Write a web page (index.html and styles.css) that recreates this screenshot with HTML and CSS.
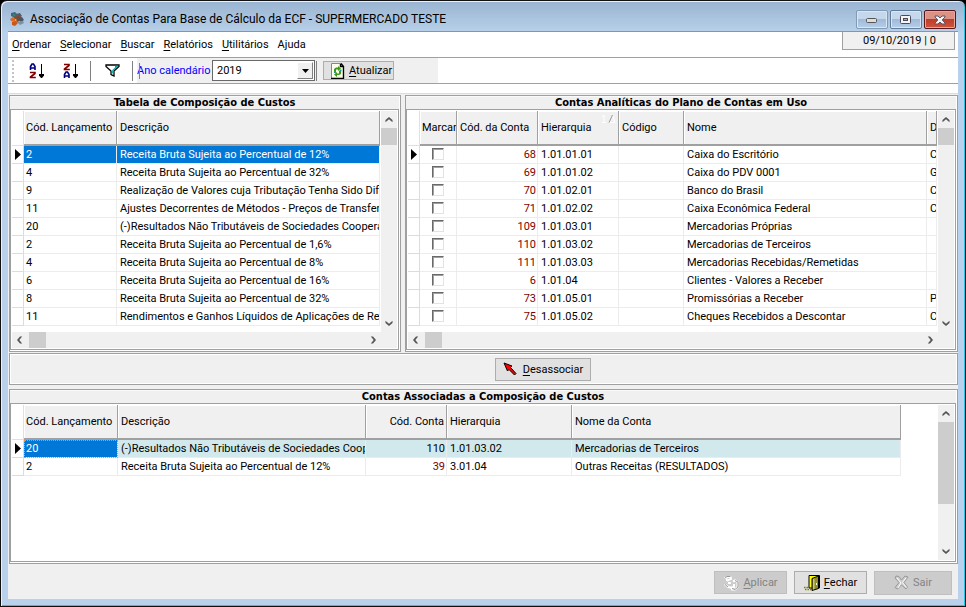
FILE: index.html
```html
<!DOCTYPE html>
<html lang="pt-BR">
<head>
<meta charset="utf-8">
<title>Associação de Contas Para Base de Cálculo da ECF</title>
<link rel="stylesheet" href="styles.css">
</head>
<body>
<svg class="defs" aria-hidden="true">
  <symbol id="up" viewBox="0 0 8 6"><path d="M0.5 5.2V3L4 0L7.5 3V5.2L4 2.3Z"/></symbol>
  <symbol id="down" viewBox="0 0 8 6"><path d="M0.5 0.8V3L4 6L7.5 3V0.8L4 3.7Z"/></symbol>
  <symbol id="left" viewBox="0 0 6 8"><path d="M5.2 0.5H3L0 4L3 7.5H5.2L2.3 4Z"/></symbol>
  <symbol id="right" viewBox="0 0 6 8"><path d="M0.8 0.5H3L6 4L3 7.5H0.8L3.7 4Z"/></symbol>
  <symbol id="cur" viewBox="0 0 6 11"><path d="M0 0L6 5.5L0 11Z"/></symbol>
</svg>
<div class="window">
  <header class="titlebar">
    <svg class="app-icon" width="16" height="16" viewBox="0 0 16 16" aria-hidden="true"><path d="M2 2l4-1 3 3-3 3-4-2z" fill="#3b6b78"/><path d="M7 3l4-1 2 3-3 2z" fill="#555b66"/><path d="M5 6l5-2 3 3-4 4-5-2z" fill="#7b4b3a"/><path d="M1 8l3-2 4 3-2 2-4-1z" fill="#e06a1c"/><path d="M8 8l5-2 2 3-3 2z" fill="#4a5568"/><path d="M3 11l4-1 2 2-3 3-3-1z" fill="#c8581c"/><path d="M8 11l6-1 1 2-4 2z" fill="#8090a0"/><path d="M6 8l2 1-2 1z" fill="#e8c040"/><path d="M4 3l2 1-1 1z" fill="#49a36b"/></svg>
    <h1>Associação de Contas Para Base de Cálculo da ECF - SUPERMERCADO TESTE</h1>
    <div class="controls">
      <button class="ctl dim" aria-label="Minimizar"><svg width="12" height="9" viewBox="0 0 12 9"><rect x=".5" y="3.5" width="10" height="4" rx="1" fill="#ddd" stroke="#555"/></svg></button>
      <button class="ctl" aria-label="Maximizar"><svg width="12" height="10" viewBox="0 0 12 10"><rect x=".5" y=".5" width="10" height="8" rx="1" fill="#f4f4f4" stroke="#4a4a5c"/><rect x="3.5" y="3.5" width="4" height="2" fill="#8fb0d4" stroke="#4a4a5c"/></svg></button>
      <button class="ctl close" aria-label="Fechar janela"><svg width="12" height="10" viewBox="0 0 12 10"><path d="M1 1H4L6 3L8 1H11V2L8.2 5L11 8V9H8L6 7L4 9H1V8L3.8 5L1 2Z" fill="#f4f4f4" stroke="#555566"/></svg></button>
    </div>
  </header>
  <main class="client">
    <div class="menubar">
      <nav>
        <a href="#"><u>O</u>rdenar</a><a href="#"><u>S</u>elecionar</a><a href="#"><u>B</u>uscar</a><a href="#"><u>R</u>elatórios</a><a href="#"><u>U</u>tilitários</a><a href="#">Ajuda</a>
      </nav>
      <div class="date">09/10/2019 | 0</div>
    </div>
    <div class="toolbar">
      <span class="grip"></span>
      <button class="tool" aria-label="Ordem crescente"><svg width="16" height="16" viewBox="0 0 16 16" fill="none"><path d="M1.500 7V3.500L3 1H4.500L6 3.500V7M1.500 5H6" stroke="#000080" stroke-width="1.600"/><path d="M1 9.500H6V10.500L1.500 14V14.500H6.800" stroke="#800000" stroke-width="1.600"/><path d="M12.500 1V12" stroke="#000"/><path d="M10 11H15V12.500L13 15H12L10 12.500Z" fill="#000"/></svg></button>
      <button class="tool" aria-label="Ordem decrescente"><svg width="16" height="16" viewBox="0 0 16 16" fill="none"><path d="M1 1.500H6V2.500L1.500 6V6.500H6.800" stroke="#800000" stroke-width="1.600"/><path d="M1.500 15V11.500L3 9H4.500L6 11.500V15M1.500 13H6" stroke="#000080" stroke-width="1.600"/><path d="M12.500 1V12" stroke="#000"/><path d="M10 11H15V12.500L13 15H12L10 12.500Z" fill="#000"/></svg></button>
      <span class="sep"></span>
      <button class="tool filter" aria-label="Filtrar"><svg width="15" height="13" viewBox="0 0 15 13"><path d="M1 1H14V2.500L9 7V12L6 10.500V7L1 2.500Z" fill="#fff" stroke="#000" stroke-width="1.300"/><path d="M10 2.500H12L7.800 6.500V9.500" fill="none" stroke="#00a8a8" stroke-width="1.300"/></svg></button>
      <span class="sep"></span>
      <div class="tools">
        <label for="ano">Ano calendário</label>
        <span class="combo"><select id="ano"><option>2019</option></select><span class="arrow"><svg width="7" height="4" viewBox="0 0 7 4"><path d="M0 0H7L3.500 4Z"/></svg></span></span>
        <span class="sep tight"></span>
        <button class="btn refresh"><svg width="14" height="16" viewBox="0 0 14 16"><path d="M.5 .5H9L13.500 4V15.500H.5Z" fill="#fdfdf2"/><path d="M.5 15V.5H10" fill="none" stroke="#888"/><path d="M10 .5L12.500 3.500V15.500H0M9.500 1V3.500H12.500" fill="none" stroke="#000" stroke-width="1.400"/><path d="M3 8V6L5 4.500H7V3L10 5.500L7 8V6.500H5V8Z" fill="#3a9a10"/><path d="M10 8V11L8 12H6V14L3 11.500L6 9V10.500H8V8Z" fill="#3a9a10"/><path d="M3 8H5V10H3ZM8.500 6.500H10.500V8.500H8.500Z" fill="#2196a0"/></svg><span><u>A</u>tualizar</span></button>
      </div>
    </div>
    <div class="strip"></div>
    <div class="work">
      <div class="top">
        <section class="panel">
          <h2>Tabela de Composição de Custos</h2>
          <div class="grid">
            <div class="view">
              <table>
                <colgroup><col class="w12"><col class="w93"><col></colgroup>
                <thead><tr><th></th><th>Cód. Lançamento</th><th>Descrição</th></tr></thead>
                <tbody>
                <tr class="sel"><td><svg class="cur"><use href="#cur"/></svg></td><td>2</td><td>Receita Bruta Sujeita ao Percentual de 12%</td></tr>
                <tr><td></td><td>4</td><td>Receita Bruta Sujeita ao Percentual de 32%</td></tr>
                <tr><td></td><td>9</td><td>Realização de Valores cuja Tributação Tenha Sido Dife</td></tr>
                <tr><td></td><td>11</td><td>Ajustes Decorrentes de Métodos - Preços de Transferê</td></tr>
                <tr><td></td><td>20</td><td>(-)Resultados Não Tributáveis de Sociedades Cooperat</td></tr>
                <tr><td></td><td>2</td><td>Receita Bruta Sujeita ao Percentual de 1,6%</td></tr>
                <tr><td></td><td>4</td><td>Receita Bruta Sujeita ao Percentual de 8%</td></tr>
                <tr><td></td><td>6</td><td>Receita Bruta Sujeita ao Percentual de 16%</td></tr>
                <tr><td></td><td>8</td><td>Receita Bruta Sujeita ao Percentual de 32%</td></tr>
                <tr><td></td><td>11</td><td>Rendimentos e Ganhos Líquidos de Aplicações de Ren</td></tr>
                </tbody>
              </table>
            </div>
            <div class="vbar"><svg class="ar"><use href="#up"/></svg><i class="thumb"></i><svg class="ar end"><use href="#down"/></svg></div>
            <div class="hbar"><svg class="ah"><use href="#left"/></svg><i class="thumb"></i><svg class="ah end"><use href="#right"/></svg></div>
          </div>
        </section>
        <section class="panel">
          <h2>Contas Analíticas do Plano de Contas em Uso</h2>
          <div class="grid">
            <div class="view">
              <table>
                <colgroup><col class="w12"><col class="w37"><col class="w81"><col class="w81"><col class="w65"><col><col class="w10"></colgroup>
                <thead><tr><th></th><th>Marcar</th><th>Cód. da Conta</th><th class="sorted">Hierarquia<svg class="sort" width="14" height="9" viewBox="0 0 14 9"><path d="M0 3L2 1V9M0 8.500H4M8 8.500H13L10.500 1" fill="none" stroke="#fff"/><path d="M7 8.500L10.500 1" fill="none" stroke="#999"/></svg></th><th>Código</th><th>Nome</th><th>D</th></tr></thead>
                <tbody>
                <tr><td><svg class="cur"><use href="#cur"/></svg></td><td class="ck"><input type="checkbox" aria-label="Marcar 68"></td><td class="num">68</td><td>1.01.01.01</td><td></td><td>Caixa do Escritório</td><td>C</td></tr>
                <tr><td></td><td class="ck"><input type="checkbox" aria-label="Marcar 69"></td><td class="num">69</td><td>1.01.01.02</td><td></td><td>Caixa do PDV 0001</td><td>G</td></tr>
                <tr><td></td><td class="ck"><input type="checkbox" aria-label="Marcar 70"></td><td class="num">70</td><td>1.01.02.01</td><td></td><td>Banco do Brasil</td><td>C</td></tr>
                <tr><td></td><td class="ck"><input type="checkbox" aria-label="Marcar 71"></td><td class="num">71</td><td>1.01.02.02</td><td></td><td>Caixa Econômica Federal</td><td>C</td></tr>
                <tr><td></td><td class="ck"><input type="checkbox" aria-label="Marcar 109"></td><td class="num">109</td><td>1.01.03.01</td><td></td><td>Mercadorias Próprias</td><td></td></tr>
                <tr><td></td><td class="ck"><input type="checkbox" aria-label="Marcar 110"></td><td class="num">110</td><td>1.01.03.02</td><td></td><td>Mercadorias de Terceiros</td><td></td></tr>
                <tr><td></td><td class="ck"><input type="checkbox" aria-label="Marcar 111"></td><td class="num">111</td><td>1.01.03.03</td><td></td><td>Mercadorias Recebidas/Remetidas</td><td></td></tr>
                <tr><td></td><td class="ck"><input type="checkbox" aria-label="Marcar 6"></td><td class="num">6</td><td>1.01.04</td><td></td><td>Clientes - Valores a Receber</td><td></td></tr>
                <tr><td></td><td class="ck"><input type="checkbox" aria-label="Marcar 73"></td><td class="num">73</td><td>1.01.05.01</td><td></td><td>Promissórias a Receber</td><td>P</td></tr>
                <tr><td></td><td class="ck"><input type="checkbox" aria-label="Marcar 75"></td><td class="num">75</td><td>1.01.05.02</td><td></td><td>Cheques Recebidos a Descontar</td><td>C</td></tr>
                </tbody>
              </table>
            </div>
            <div class="vbar"><svg class="ar"><use href="#up"/></svg><i class="thumb"></i><svg class="ar end"><use href="#down"/></svg></div>
            <div class="hbar"><svg class="ah"><use href="#left"/></svg><i class="thumb"></i><svg class="ah end"><use href="#right"/></svg></div>
          </div>
        </section>
      </div>
      <div class="actions">
        <button class="btn wide"><svg width="14" height="14" viewBox="0 0 14 14"><path d="M1 1L9 4L7.500 5.500L13 11.500L11.500 13L6 7.500L4.500 9Z" fill="#f00" stroke="#000"/></svg><span><u>D</u>esassociar</span></button>
      </div>
      <section class="panel fill">
        <h2>Contas Associadas a Composição de Custos</h2>
        <div class="grid">
          <div class="view wide">
            <table>
              <colgroup><col class="w12"><col class="w94"><col class="w248"><col class="w81"><col class="w125"><col></colgroup>
              <thead><tr><th></th><th>Cód. Lançamento</th><th>Descrição</th><th class="r">Cód. Conta</th><th>Hierarquia</th><th>Nome da Conta</th></tr></thead>
              <tbody>
              <tr class="soft"><td><svg class="cur"><use href="#cur"/></svg></td><td class="focus">20</td><td>(-)Resultados Não Tributáveis de Sociedades Coope</td><td class="num">110</td><td>1.01.03.02</td><td>Mercadorias de Terceiros</td></tr>
              <tr><td></td><td>2</td><td>Receita Bruta Sujeita ao Percentual de 12%</td><td class="num">39</td><td>3.01.04</td><td>Outras Receitas (RESULTADOS)</td></tr>
              </tbody>
            </table>
          </div>
          <div class="vbar"><svg class="ar"><use href="#up"/></svg><i class="thumb long"></i><svg class="ar end"><use href="#down"/></svg></div>
        </div>
      </section>
    </div>
    <footer>
      <button class="btn" disabled><svg width="16" height="16" viewBox="0 0 16 16" fill="none"><path d="M2 3.500L5 2H7.500L8 4L4.500 5.500L2 4V9.500L5 12L8 12.500M5 8H8M10 6.500L12 5.500L14.500 7V12L12 14.500H9L8 12.500L11 12V9" stroke="#fff" stroke-width="2"/><path d="M1.500 3.500L4 1.500H7.500M2 4V9.500L5 12M9 13.500L12 14.500L15 12V7L12 5.500" stroke="#999"/></svg><span><u>A</u>plicar</span></button>
      <button class="btn"><svg width="16" height="16" viewBox="0 0 16 16"><path d="M5 .5H15.500V13H5Z" fill="#ff0" stroke="#000"/><path d="M8 3.500L14.500 1V13.500L8 15.500Z" fill="#8c8c28" stroke="#000"/><path d="M9 4L10.500 3.500V14L9 14.500Z" fill="#c8c878"/><path d="M12 8h1v2h-1z" fill="#fff"/><path d="M0 12.500H5M1 14.500H8" stroke="#808000" stroke-width="1.500" stroke-dasharray="1.500 1"/></svg><span><u>F</u>echar</span></button>
      <button class="btn big" disabled><svg width="15" height="15" viewBox="0 0 15 15"><path d="M2 1L5 1.500L7.500 5L11 1L14 2L10 7.500L13.500 12L12 14L7.500 10L3.500 14L1 12.500L5 7.500L1 3Z" fill="#ccc" stroke="#999"/><path d="M3 3L7 8L4 13M12 3L8.500 7.500L12.500 12.500" fill="none" stroke="#fff"/></svg><span>Sair</span></button>
    </footer>
  </main>
</div>
</body>
</html>
```
FILE: styles.css
```css
* { box-sizing: border-box; }
body {
  margin: 0;
  background: #000;
  color: #000;
  font: 11px/17px Roboto, "Liberation Sans", sans-serif;
}
.defs { display: none; }
svg { flex: none; }
button, select, input { font: inherit; color: inherit; margin: 0; }
u { text-underline-offset: 2px; }

.window {
  display: flex;
  flex-direction: column;
  height: 100vh;
  padding: 0 7px 7px;
  border: 1px solid #111;
  border-radius: 7px 7px 0 0;
  background: linear-gradient(#99b4d1, #b9d1ea 32px);
  box-shadow: inset 1px 1px #e8f2fb, inset -1px -1px #2cc4e4;
}
.titlebar { display: flex; height: 30px; align-items: center; padding: 6px 2px 0 1px; flex: none; }
.titlebar h1 {
  flex: 1;
  margin: 0 0 0 5px;
  font: 12px/16px Roboto, sans-serif;
  white-space: nowrap;
}
.controls { display: flex; gap: 2px; align-self: flex-start; padding-top: 3px; }
.ctl {
  width: 32px;
  height: 19px;
  display: flex;
  align-items: center;
  justify-content: center;
  padding: 0;
  border: 1px solid #5f7c9c;
  border-radius: 2px;
  background: linear-gradient(#c5d7ea 45%, #9db9d8 46%, #b6cfe9);
  box-shadow: inset 0 0 0 1px #d9e7f5;
}
.ctl.dim { border-color: #8099b5; }
.ctl.close {
  border-color: #58161a;
  background: linear-gradient(#dc9185 45%, #bb3c28 46%, #d1543c);
  box-shadow: inset 0 0 0 1px #e6a79c;
}

.client {
  flex: 1;
  min-height: 0;
  display: flex;
  flex-direction: column;
  background: #f0f0f0;
  border-top: 1px solid #8496aa;
}
.menubar { display: flex; height: 26px; background: #fff; border-bottom: 1px solid #a0a0a0; flex: none; }
nav { display: flex; gap: 9px; padding: 4px 4px; }
nav a { color: #000; text-decoration: none; }
.date {
  margin: 0 3px 0 auto;
  width: 113px;
  height: 18px;
  padding-left: 20px;
  background: #f0f0f0;
  border: 1px solid #a0a0a0;
  border-top: 0;
}
.toolbar { display: flex; height: 26px; background: #fff; border-bottom: 1px solid #a0a0a0; flex: none; align-items: center; }
.grip { width: 2px; height: 22px; margin: 0 8px 0 4px; background: repeating-linear-gradient(#c4c4c4 0 2px, #fff 2px 4px); }
.tool { width: 34px; height: 22px; border: 0; padding: 0; background: none; display: flex; align-items: center; padding-left: 7px; }
.tool.filter { width: 41px; padding-left: 14px; }
.sep { width: 1px; height: 20px; background: #808080; }
.tools { position: relative; display: flex; align-items: center; align-self: stretch; margin-left: 4px; padding-right: 44px; background: #f0f0f0; }
.tools::before { content: ""; position: absolute; left: 2px; top: 5px; width: 1px; height: 16px; background: #808080; }
.tools label { color: #00f; width: 75px; white-space: nowrap; }
.combo { position: relative; display: flex; width: 103px; }
.combo select {
  appearance: none;
  width: 100%;
  height: 21px;
  padding: 0 4px;
  border: 1px solid #696969;
  border-radius: 0;
  background: #fff;
}
.arrow {
  position: absolute;
  right: 2px;
  top: 2px;
  width: 16px;
  height: 17px;
  display: flex;
  align-items: center;
  justify-content: center;
  background: #f0f0f0;
  border: 1px solid;
  border-color: #fff #808080 #808080 #fff;
  pointer-events: none;
}
.sep.tight { margin: 0 6px 0 1px; }
.btn {
  height: 23px;
  display: flex;
  align-items: center;
  justify-content: center;
  gap: 6px;
  padding: 0 7px;
  background: #e1e1e1;
  border: 1px solid #adadad;
  border-radius: 0;
}
.btn:disabled { background: #ccc; border-color: #bfbfbf; color: #838383; }
.btn.refresh { height: 19px; padding: 0 4px 0 7px; width: 71px; gap: 4px; justify-content: flex-start; }

.strip { height: 10px; background: #fff; border-bottom: 1px solid #dcdcdc; flex: none; }
.work { flex: 1; min-height: 0; display: flex; flex-direction: column; padding: 1px 0 0 1px; }
.top { display: grid; grid-template-columns: 392fr 553fr; gap: 4px; }
.panel {
  display: flex;
  flex-direction: column;
  min-width: 0;
  border: 1px solid #a0a0a0;
  box-shadow: inset -1px -1px #fff;
  padding: 0 1px 1px 0;
}
.panel h2 {
  margin: 0;
  font: bold 11px/13px "DejaVu Sans Condensed", sans-serif;
  text-align: center;
  box-shadow: inset 0 1px #fafafa;
}
.grid {
  flex: 1;
  min-height: 0;
  display: grid;
  grid-template-columns: minmax(0, 1fr) 16px;
  grid-template-rows: 1fr auto;
  padding: 1px;
  border: 1px solid #a0a0a0;
  background: #fff;
}
.view { overflow: hidden; padding: 0 1px 6px 0; }
.view.wide { padding: 0 37px 0 0; }
table { width: 100%; table-layout: fixed; border-collapse: separate; border-spacing: 0; }
.w10 { width: 10px; }
.w12 { width: 12px; }
.w37 { width: 37px; }
.w65 { width: 65px; }
.w81 { width: 81px; }
.w93 { width: 93px; }
.w94 { width: 94px; }
.w125 { width: 125px; }
.w248 { width: 248px; }
th {
  height: 35px;
  padding: 0 0 0 3px;
  font-weight: normal;
  text-align: left;
  white-space: nowrap;
  overflow: hidden;
  background: #f0f0f0;
  border-right: 1px solid #a0a0a0;
  border-bottom: 2px solid #a0a0a0;
  box-shadow: inset 1px 1px #fff;
}
th:first-child { background: #fff; border-color: #e0e0e0; border-bottom-width: 1px; }
th:nth-child(2) { padding-left: 2px; }
th.r { text-align: right; padding-right: 2px; }
.sorted { position: relative; }
.sort { position: absolute; right: 2px; top: 3px; }
td {
  height: 18px;
  padding: 1px 1px 0 3px;
  line-height: 16px;
  white-space: nowrap;
  overflow: hidden;
  border-right: 1px solid #ececec;
  border-bottom: 1px solid #ececec;
}
td:first-child { padding: 0 0 0 3px; border-color: #dcdcdc; }
td:nth-child(2) { padding-left: 2px; }
.cur { display: block; width: 6px; height: 11px; }
.sel td:not(:first-child) { background: #0078d7; color: #fff; }
.num { text-align: right; color: #800000; }
.soft td:not(:first-child) { background: #d1e9ed; }
.soft .num { color: #000; }
.soft td.focus:not(:first-child) { background: #0078d7; color: #fff; outline: 1px dotted #f09040; outline-offset: -1px; }
td.ck:nth-child(2) { padding: 0 0 0 12px; }
.ck input {
  appearance: none;
  display: block;
  width: 12px;
  height: 12px;
  margin-top: -1px;
  background: #fff;
  border: 1px solid;
  border-color: #696969 #e3e3e3 #e3e3e3 #696969;
  box-shadow: inset 1px 1px #a0a0a0;
}
.vbar, .hbar { display: flex; background: #f0f0f0; align-items: center; fill: #555; }
.vbar { flex-direction: column; }
.hbar { grid-column: 1 / -1; height: 16px; padding-right: 16px; }
.thumb { background: #cdcdcd; }
.vbar .thumb { width: 16px; height: 17px; }
.vbar .thumb.long { height: 0; flex: 0 0 82px; }
.hbar .thumb { width: 17px; height: 16px; }
.ar { width: 8px; height: 6px; margin: 6px 0 5px; }
.ah { width: 6px; height: 8px; margin: 0 6px 0 5px; }
.ar.end { margin-top: auto; margin-bottom: 6px; }
.ah.end { margin-left: auto; margin-right: 5px; }

.actions {
  display: flex;
  justify-content: center;
  align-items: center;
  height: 32px;
  margin: 1px 0 4px;
  padding-left: 119px;
  border: 1px solid #a0a0a0;
  box-shadow: inset 1px 1px #fff, inset -1px -1px #fff;
  flex: none;
}
.btn.wide { width: 96px; }
.fill { flex: 1; min-height: 0; }
footer { display: flex; justify-content: flex-end; align-items: center; height: 35px; gap: 7px; padding: 2px 6px 0 0; flex: none; }
footer .btn { width: 73px; gap: 4px; }
footer .btn.big { width: 78px; height: 24px; }
```
